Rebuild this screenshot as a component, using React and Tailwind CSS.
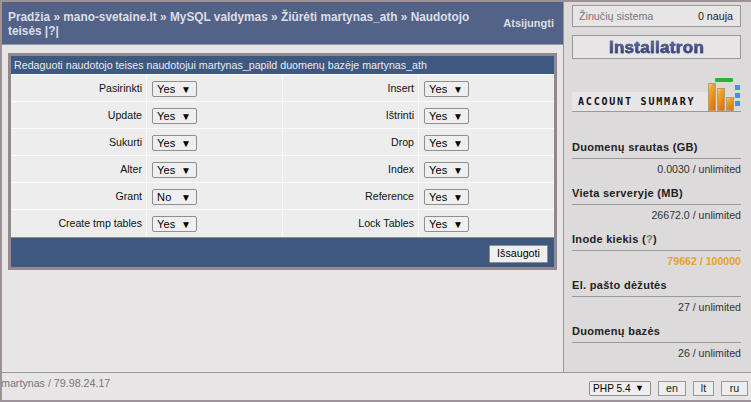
// App.jsx
const rows = [
  ['Pasirinkti', 'Yes', 'Insert', 'Yes'],
  ['Update', 'Yes', 'Ištrinti', 'Yes'],
  ['Sukurti', 'Yes', 'Drop', 'Yes'],
  ['Alter', 'Yes', 'Index', 'Yes'],
  ['Grant', 'No', 'Reference', 'Yes'],
  ['Create tmp tables', 'Yes', 'Lock Tables', 'Yes'],
];

const stats = [
  { title: 'Duomenų srautas (GB)', value: '0.0030 / unlimited' },
  { title: 'Vieta serveryje (MB)', value: '26672.0 / unlimited' },
  { title: 'Inode kiekis', help: true, value: '79662 / 100000', warn: true },
  { title: 'El. pašto dėžutės', value: '27 / unlimited' },
  { title: 'Duomenų bazės', value: '26 / unlimited' },
];

function Select({ value }) {
  return (
    <span className="flex h-[16px] w-[45px] items-center justify-between rounded-[2px] border border-[#8f8f8f] bg-[#efefef] pr-[5px] pl-[4px] text-[11px] text-black">
      <span className="tracking-[0.2px]">{value}</span>
      <span className="text-[10px]">▼</span>
    </span>
  );
}

function Cell({ label, value, labelWidth, selectWidth }) {
  return (
    <>
      <div className={`flex items-center justify-end pr-[4px] text-[10.6px] text-[#111] ${labelWidth}`}>{label}</div>
      <div className={`-mt-[2px] flex items-center border-l border-[#fbfbfb] pt-[2px] pl-[5px] ${selectWidth}`}>
        <Select value={value} />
      </div>
    </>
  );
}

function ChartIcon() {
  return (
    <svg width="33" height="34" viewBox="0 0 33 34" className="shrink-0">
      <defs>
        <linearGradient id="bar" x1="0" x2="0.6" y1="0" y2="1">
          <stop offset="0" stopColor="#f3d9a8" />
          <stop offset="0.3" stopColor="#efa52c" />
          <stop offset="1" stopColor="#dd7410" />
        </linearGradient>
      </defs>
      <rect x="7" y="1" width="18" height="4" rx="1" fill="#2cb52c" />
      <rect x="0.5" y="6.5" width="7" height="27" fill="url(#bar)" stroke="#b79a7a" />
      <rect x="9.5" y="11.5" width="7" height="22" fill="url(#bar)" stroke="#b79a7a" />
      <rect x="18.5" y="20.5" width="7" height="13" fill="url(#bar)" stroke="#b79a7a" />
      <rect x="27" y="8" width="5" height="5" fill="#4c8fdc" />
      <rect x="27" y="16" width="5" height="5" fill="#4c8fdc" />
      <rect x="27" y="24" width="5" height="5" fill="#4c8fdc" />
    </svg>
  );
}

export default function App() {
  return (
    <div className="flex h-[402px] w-[751px] flex-col overflow-hidden border-y-2 border-[#9d9298] bg-[#e7e5e6] font-['Liberation_Sans',Arial,sans-serif]">
      <div className="flex h-[370px] shrink-0">
        {/* Main */}
        <div className="flex w-[563px] flex-col border-l-2 border-[#9d9298]">
          <div className="flex h-[43px] items-center justify-between border-b border-[#8f99ad] bg-[#536387] pr-[9px] pl-[6px]">
            <div className="w-[470px] pt-[2px] text-[11.85px] leading-[14.5px] font-bold text-[#dcdee6]">
              Pradžia » mano-svetaine.lt » MySQL valdymas » Žiūrėti martynas_ath » Naudotojo teisės |?|
            </div>
            <div className="text-[11px] font-bold text-[#dcdee6]">Atsijungti</div>
          </div>

          {/* Permissions */}
          <div className="mt-[8px] ml-[6px] w-[549px] border-[3px] border-[#93888e] bg-[#3f587f]">
            <div className="h-[18px] pl-[3px] text-[10.7px] leading-[18px] text-[#e8ebf2]">
              Redaguoti naudotojo teises naudotojui martynas_papild duomenų bazėje martynas_ath
            </div>
            <div className="border-b border-[#8d8d8d] bg-[#ededed] pb-[1px]">
              {rows.map((row) => (
                <div key={row[0]} className="flex h-[27px] border-t border-[#fbfbfb] pt-[2px]">
                  <Cell label={row[0]} value={row[1]} labelWidth="w-[135px]" selectWidth="w-[136px]" />
                  <div className="-mt-[2px] w-[1px] bg-[#fbfbfb]" />
                  <Cell label={row[2]} value={row[3]} labelWidth="w-[135px]" selectWidth="w-[136px]" />
                </div>
              ))}
            </div>
            <div className="flex h-[29px] items-center justify-end pt-[2px] pr-[6px]">
              <span className="flex h-[18px] w-[59px] items-center justify-center rounded-[1px] border border-[#8f8f8f] bg-[#f0f0f0] text-[10.7px] text-black">Išsaugoti</span>
            </div>
          </div>
        </div>

        {/* Sidebar */}
        <div className="flex w-[188px] flex-col border-l border-[#9d9298] bg-[#dcdadb] pr-[10px] pl-[8px]">
          <div className="mt-[3px] flex h-[22px] items-center justify-between border border-[#999] bg-[#e7e5e6] pr-[7px] pl-[6px] text-[10.7px]">
            <span className="text-[#777]">Žinučių sistema</span>
            <span className="text-[#222]">0 nauja</span>
          </div>
          <div className="mt-[8px] flex h-[24px] items-center justify-center border border-[#999] bg-[#e7e5e6]">
            <span className="bg-gradient-to-b from-[#6a73a3] to-[#2a3370] bg-clip-text text-[17px] leading-none font-bold tracking-[0.3px] text-transparent [-webkit-text-stroke:0.5px_#4a5488]">Installatron</span>
          </div>
          <div className="mt-[18px] flex h-[34px] items-end">
            <div className="flex h-[19px] flex-1 items-center bg-[#e7e5e6] pl-[6px] font-['DejaVu_Sans_Mono',monospace] text-[10px] font-bold tracking-[1.8px] text-[#111]">
              ACCOUNT SUMMARY
            </div>
            <ChartIcon />
          </div>
          <div className="border-t border-[#999]" />
          <div className="mt-[28px] flex flex-col">
            {stats.map((s) => (
              <div key={s.title} className="mb-[7px] flex flex-col">
                <div className="box-content h-[18px] border-b border-[#999] text-[11px] leading-[14px] font-bold tracking-[0.3px] text-[#222]">
                  {s.title}
                  {s.help && <> (<span className="text-[#777]">?</span>)</>}
                </div>
                <div className={`text-right text-[10.6px] leading-[20px] ${s.warn ? 'font-bold text-[#e8a02c]' : 'text-[#333]'}`}>
                  {s.value}
                </div>
              </div>
            ))}
          </div>
        </div>
      </div>

      {/* Footer */}
      <div className="flex h-[28px] items-start justify-between overflow-hidden border-t border-l-2 border-[#999] border-l-[#9d9298] bg-[#e7e5e6] pr-[3px]">
        <span className="-ml-[1px] pt-[3px] text-[10.7px] leading-[14px] text-[#777]">martynas / 79.98.24.17</span>
        <div className="flex items-center pt-[8px]">
          <span className="flex h-[15px] w-[62px] items-center justify-between rounded-[2px] border border-[#8f8f8f] bg-[#efefef] pr-[6px] pl-[3px] text-[10.2px] text-black">
            PHP 5.4 <span className="text-[9px]">▼</span>
          </span>
          <span className="ml-[7px] flex h-[15px] w-[28px] items-center justify-center border border-[#999] bg-[#eee] text-[10.7px] text-[#222]">en</span>
          <span className="ml-[7px] flex h-[15px] w-[21px] items-center justify-center border border-[#999] bg-[#eee] text-[10.7px] text-[#222]">lt</span>
          <span className="ml-[7px] flex h-[15px] w-[27px] items-center justify-center border border-[#999] bg-[#eee] text-[10.7px] text-[#222]">ru</span>
        </div>
      </div>
    </div>
  );
}
